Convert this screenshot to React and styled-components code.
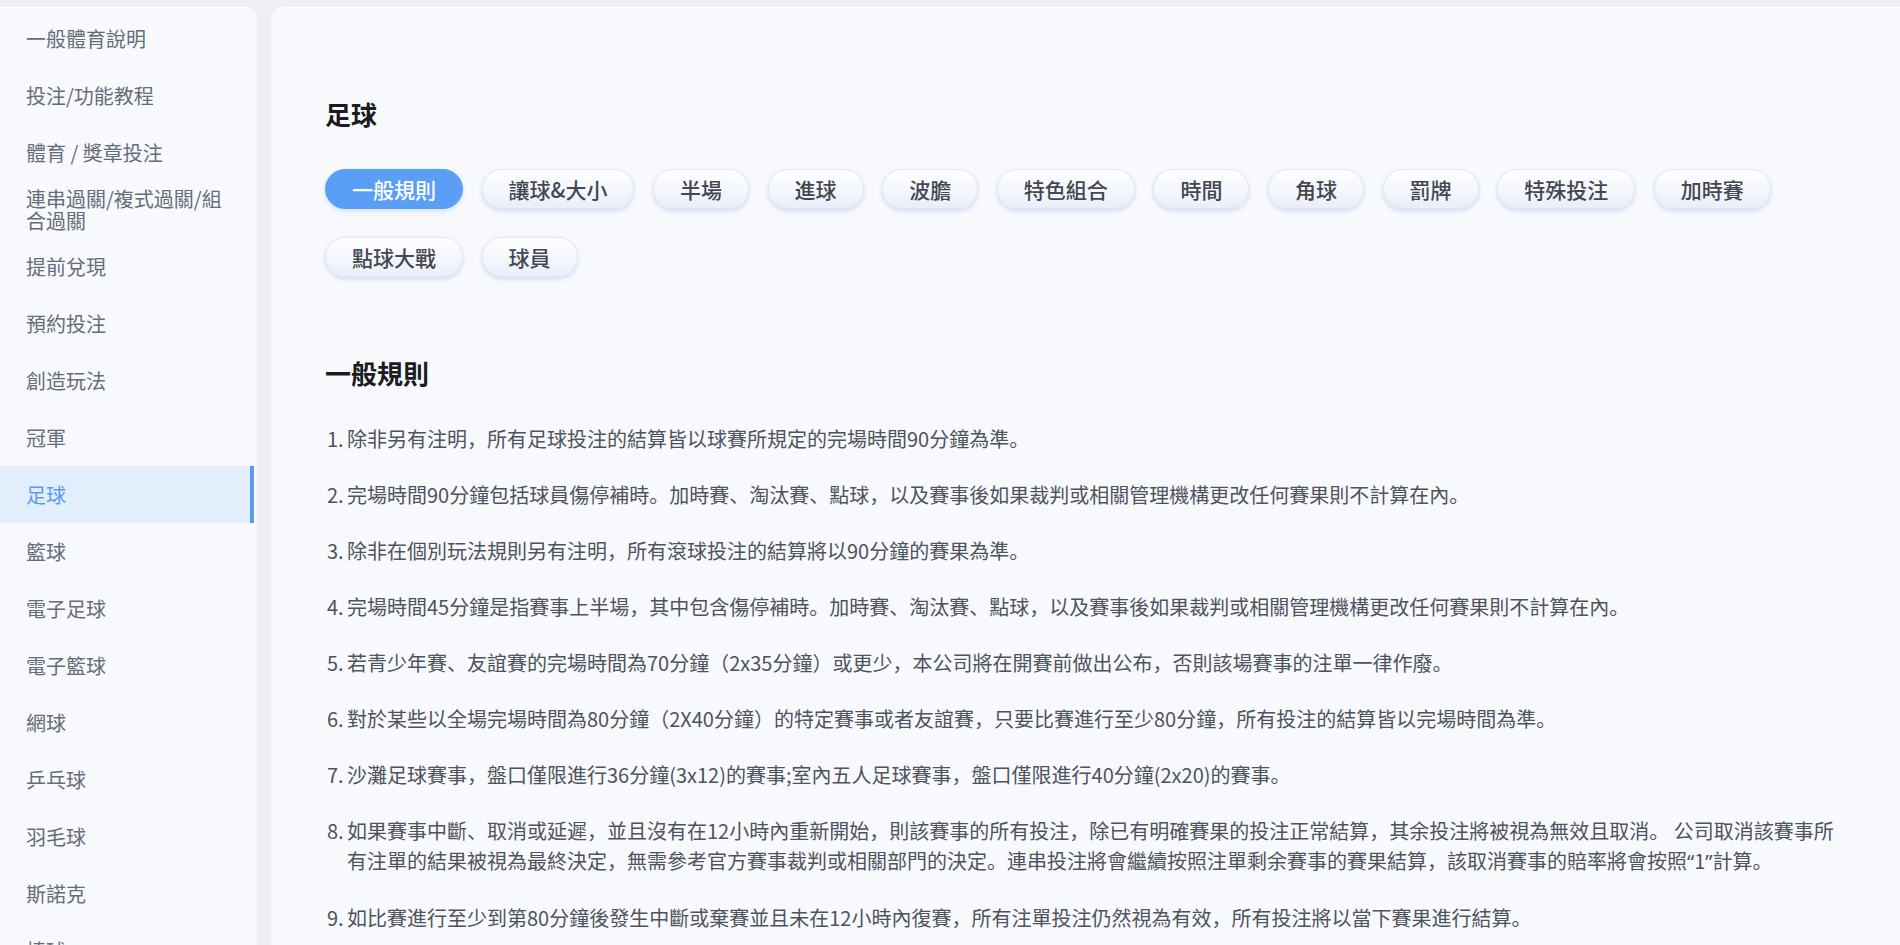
import React, { useState } from "react";
import styled, { createGlobalStyle } from "styled-components";

const GlobalStyle = createGlobalStyle`
	html, body {
		margin: 0;
		padding: 0;
		background: #eeeff3;
	}
	body {
		font-family: "Noto Sans CJK SC", "Noto Sans CJK TC", "Noto Sans", sans-serif;
	}
	* {
		box-sizing: border-box;
	}
`;

const menuItems = [
	"一般體育說明",
	"投注/功能教程",
	"體育 / 獎章投注",
	"連串過關/複式過關/組合過關",
	"提前兌現",
	"預約投注",
	"創造玩法",
	"冠軍",
	"足球",
	"籃球",
	"電子足球",
	"電子籃球",
	"網球",
	"乒乓球",
	"羽毛球",
	"斯諾克",
	"棒球",
	"美式足球",
	"排球",
];

const tabs = [
	"一般規則",
	"讓球&大小",
	"半場",
	"進球",
	"波膽",
	"特色組合",
	"時間",
	"角球",
	"罰牌",
	"特殊投注",
	"加時賽",
	"點球大戰",
	"球員",
];

const rules = [
	"除非另有注明，所有足球投注的結算皆以球賽所規定的完場時間90分鐘為準。",
	"完場時間90分鐘包括球員傷停補時。加時賽、淘汰賽、點球，以及賽事後如果裁判或相關管理機構更改任何賽果則不計算在內。",
	"除非在個別玩法規則另有注明，所有滾球投注的結算將以90分鐘的賽果為準。",
	"完場時間45分鐘是指賽事上半場，其中包含傷停補時。加時賽、淘汰賽、點球，以及賽事後如果裁判或相關管理機構更改任何賽果則不計算在內。",
	"若青少年賽、友誼賽的完場時間為70分鐘（2x35分鐘）或更少，本公司將在開賽前做出公布，否則該場賽事的注單一律作廢。",
	"對於某些以全場完場時間為80分鐘（2X40分鐘）的特定賽事或者友誼賽，只要比賽進行至少80分鐘，所有投注的結算皆以完場時間為準。",
	"沙灘足球賽事，盤口僅限進行36分鐘(3x12)的賽事;室內五人足球賽事，盤口僅限進行40分鐘(2x20)的賽事。",
	"如果賽事中斷、取消或延遲，並且沒有在12小時內重新開始，則該賽事的所有投注，除已有明確賽果的投注正常結算，其余投注將被視為無效且取消。 公司取消該賽事所有注單的結果被視為最終決定，無需參考官方賽事裁判或相關部門的決定。連串投注將會繼續按照注單剩余賽事的賽果結算，該取消賽事的賠率將會按照“1”計算。",
	"如比賽進行至少到第80分鐘後發生中斷或棄賽並且未在12小時內復賽，所有注單投注仍然視為有效，所有投注將以當下賽果進行結算。",
	"如果賽事在開賽前被取消或延期並且沒有在12小時內重新開始，所有注單將被視為無效。",
];

// curly quotes are narrow (latin) in the original, not full width
const renderRule = (text) =>
	text.split(/([“”])/).map((part, i) =>
		part === "“" || part === "”" ? <Quote key={i}>{part}</Quote> : part
	);

const App = () => {
	const [activeMenu, setActiveMenu] = useState("足球");
	const [activeTab, setActiveTab] = useState("一般規則");

	return (
		<>
			<GlobalStyle />
			<Page>
				<Sidebar>
					{menuItems.map((item) => (
						<MenuItem
							key={item}
							$active={item === activeMenu}
							onClick={() => setActiveMenu(item)}
						>
							<span>{item}</span>
						</MenuItem>
					))}
				</Sidebar>

				<Content>
					<Title>足球</Title>
					<TabList>
						{tabs.map((tab) => (
							<Tab
								key={tab}
								$active={tab === activeTab}
								onClick={() => setActiveTab(tab)}
							>
								{tab}
							</Tab>
						))}
					</TabList>

					<SectionTitle>{activeTab}</SectionTitle>
					<RuleList>
						{rules.map((rule, i) => (
							<Rule key={i}>
								<RuleNum>{i + 1}.</RuleNum>
								<span>{renderRule(rule)}</span>
							</Rule>
						))}
					</RuleList>
				</Content>
			</Page>
		</>
	);
};

export default App;

const Page = styled.div`
	display: flex;
	gap: 14px;
	height: 100vh;
	padding-top: 7px;
	overflow: hidden;
`;

const Sidebar = styled.nav`
	width: 257px;
	flex-shrink: 0;
	background: #f7f9fc;
	border-top: 1px solid #ffffff;
	border-radius: 0 12px 0 0;
	padding: 2px 3px 0 0;
	overflow: hidden;
`;

const MenuItem = styled.div`
	height: 57px;
	display: flex;
	align-items: center;
	padding: 0 12px 0 26px;
	font-size: 20px;
	line-height: 22px;
	color: ${(p) => (p.$active ? "#5b9cf0" : "#676c7a")};
	background: ${(p) => (p.$active ? "#e2eefc" : "transparent")};
	border-right: 4px solid ${(p) => (p.$active ? "#5b9bea" : "transparent")};
	cursor: pointer;
`;

const Content = styled.main`
	flex: 1;
	min-width: 0;
	background: #f7f9fd;
	border-top: 1px solid #ffffff;
	border-radius: 14px 0 0 0;
	padding: 88px 54px 0 54px;
	overflow: hidden;
`;

const Title = styled.h1`
	margin: 0 0 37px;
	font-size: 26px;
	line-height: 36px;
	font-weight: 700;
	color: #1c1c1e;
`;

const TabList = styled.div`
	display: flex;
	flex-wrap: wrap;
	gap: 28px 18.6px;
`;

const Tab = styled.button`
	height: 40px;
	padding: 0 26px;
	border-radius: 20px;
	font-family: inherit;
	font-size: 21px;
	font-weight: 500;
	line-height: 1;
	cursor: pointer;
	border: 1px solid ${(p) => (p.$active ? "#5a9ef5" : "#e0e7f5")};
	color: ${(p) => (p.$active ? "#ffffff" : "#45474e")};
	background: ${(p) =>
		p.$active
			? "#5a9ef5"
			: "linear-gradient(180deg, #ffffff 0%, #f3f6fd 55%, #e9eefa 100%)"};
	box-shadow: ${(p) =>
		p.$active
			? "0 2px 4px rgba(90, 158, 245, 0.25)"
			: "0 2px 4px rgba(150, 170, 220, 0.4)"};
`;

const SectionTitle = styled.h2`
	margin: 78px 0 33px;
	font-size: 26px;
	line-height: 36px;
	font-weight: 700;
	color: #1c1c1e;
`;

const RuleList = styled.ol`
	list-style: none;
	margin: 0;
	padding: 0 0 0 2px;
	display: flex;
	flex-direction: column;
	gap: 26px;
`;

const Rule = styled.li`
	display: flex;
	font-size: 20px;
	line-height: 30px;
	color: #4f535b;
`;

const RuleNum = styled.span`
	flex-shrink: 0;
	width: 20px;
`;

const Quote = styled.span`
	font-family: "Noto Sans", "Liberation Sans", sans-serif;
`;
